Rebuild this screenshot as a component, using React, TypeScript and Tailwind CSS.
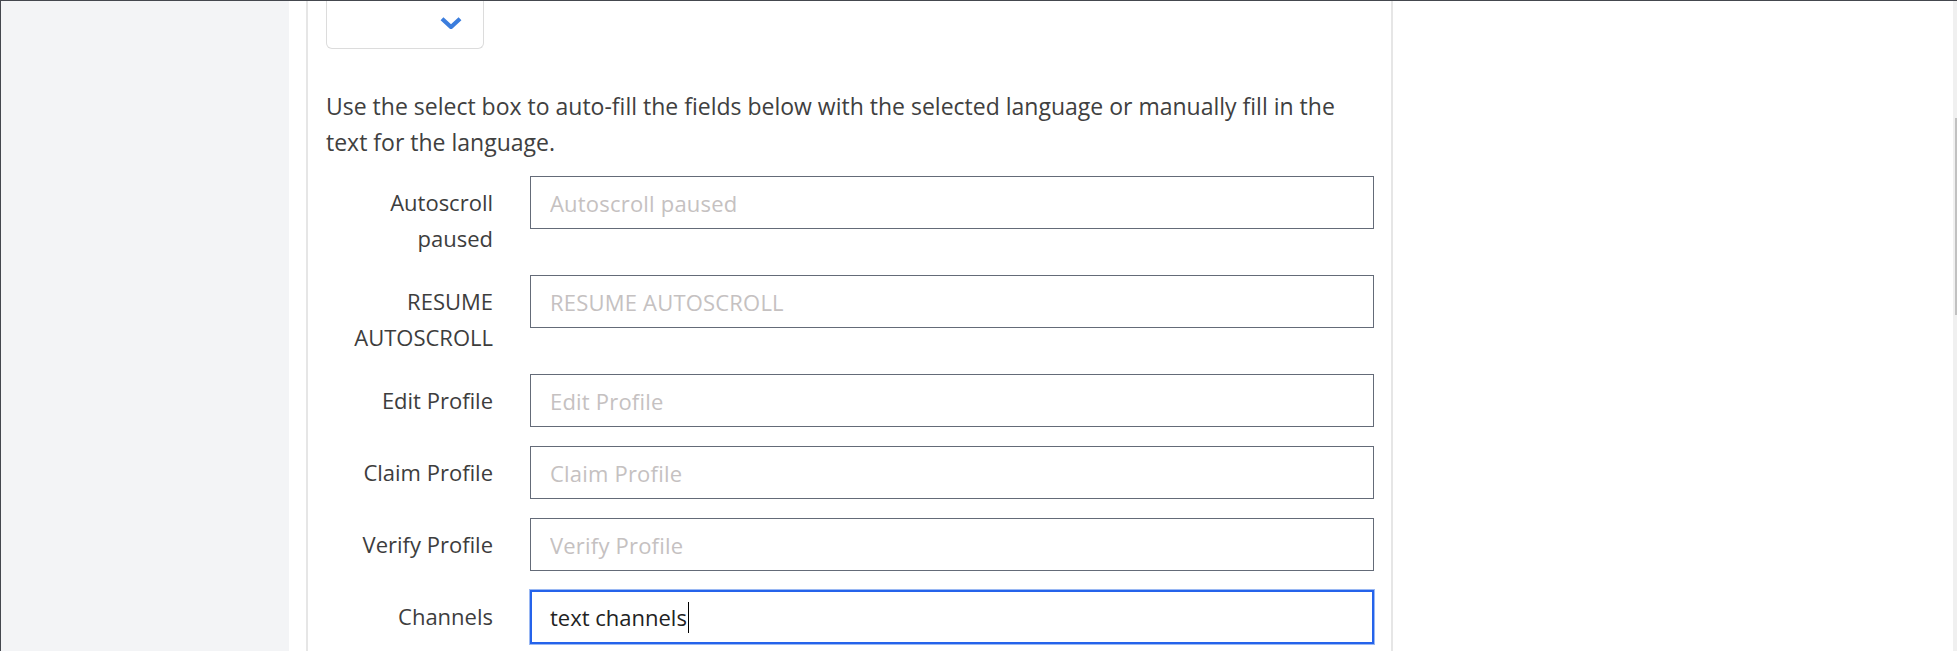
const fields = [
  { label: ['Autoscroll', 'paused'], placeholder: 'Autoscroll paused' },
  { label: ['RESUME', 'AUTOSCROLL'], placeholder: 'RESUME AUTOSCROLL' },
  { label: ['Edit Profile'], placeholder: 'Edit Profile' },
  { label: ['Claim Profile'], placeholder: 'Claim Profile' },
  { label: ['Verify Profile'], placeholder: 'Verify Profile' },
];

function Chevron() {
  return (
    <svg width="22" height="12" viewBox="0 0 22 12" fill="none">
      <path d="M2 1.8 L11 10 L20 1.8" stroke="#3b7ddd" strokeWidth="4.2" strokeLinejoin="miter" />
    </svg>
  );
}

function FieldRow({ label, placeholder }: { label: string[]; placeholder: string }) {
  return (
    <div className="mb-[19px] flex items-start">
      <label className="w-[167px] shrink-0 pt-[8px] text-right leading-[36px] text-[#3d3d3d]">
        {label.map((line) => (
          <div key={line}>{line}</div>
        ))}
      </label>
      <input
        className="ml-[37px] h-[53px] flex-1 border border-[#646b78] bg-white px-[19px] text-[#222] outline-none placeholder:tracking-[0.2px] placeholder:text-[#c5c1c1]"
        placeholder={placeholder}
      />
    </div>
  );
}

export default function App() {
  return (
    <div className="flex h-[651px] w-full overflow-hidden border-t border-l border-[#44474e] bg-white font-['Open_Sans',sans-serif] text-[22px]">
      <aside className="w-[288px] shrink-0 bg-[#f3f4f6]" />
      <main className="flex flex-1 pl-[17px]">
        <section className="w-[1087px] border-x-2 border-[#e6e6e6] pl-[18px] pr-[17px]">
          <div className="flex h-[48px] w-[158px] items-start justify-end rounded-b-[6px] border-x border-b border-[#dcdcdc] pt-[16px] pr-[21px]">
            <Chevron />
          </div>
          <p className="mt-[39px] text-[23px] leading-[36px] whitespace-nowrap text-[#404040]">
            Use the select box to auto-fill the fields below with the selected language or manually fill in the
            <br />
            text for the language.
          </p>
          <div className="mt-[16px]">
            {fields.map((f) => (
              <FieldRow key={f.placeholder} label={f.label} placeholder={f.placeholder} />
            ))}
            <div className="flex items-start">
              <span className="w-[167px] shrink-0 pt-[8px] text-right leading-[36px] text-[#3d3d3d]">Channels</span>
              <div className="ml-[37px] flex h-[54px] flex-1 items-center border-2 border-[#2563eb] px-[18px] text-[#222] shadow-[0_0_0_1px_#9ab8f3]">
                text channels
                <span className="ml-px inline-block h-[31px] w-px bg-black" />
              </div>
            </div>
          </div>
        </section>
      </main>
      <div className="flex w-[4px] shrink-0 justify-end bg-[#f0f0f0]">
        <div className="mt-[117px] h-[197px] w-[2px] bg-[#c1c1c1]" />
      </div>
    </div>
  );
}
